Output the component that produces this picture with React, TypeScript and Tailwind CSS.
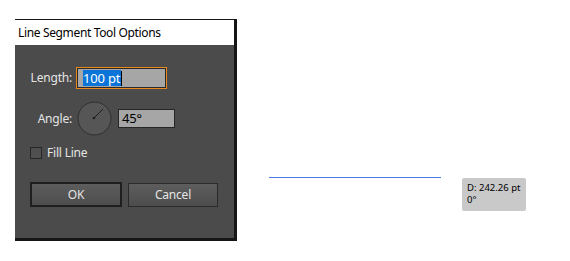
import { useState } from 'react'

const font = { fontFamily: '"Segoe UI", "Noto Sans", "DejaVu Sans", sans-serif' }

function Dial({ angle }: { angle: number }) {
  const r = (angle * Math.PI) / 180
  const x = 17 + Math.cos(r) * 13
  const y = 17 - Math.sin(r) * 13
  return (
    <svg width="35" height="35" viewBox="0 0 35 35" className="block">
      <circle cx="17.5" cy="17.5" r="16.5" fill="#565656" stroke="#2f2f2f" strokeWidth="1" />
      <line x1="17" y1="17" x2={x} y2={y} stroke="#1e1e1e" strokeWidth="1" />
      <circle cx="17" cy="17" r="1.3" fill="#1e1e1e" />
    </svg>
  )
}

export default function App() {
  const [fill, setFill] = useState(false)

  return (
    <div className="relative w-[570px] h-[261px] bg-white overflow-hidden" style={font}>
      <div className="flex pt-[19px] pl-[15px]">
        {/* Dialog */}
        <div className="w-[222px] h-[222px] flex flex-col border-t border-r-[3px] border-b-[3px] border-[#161616] bg-[#4b4b4b]">
          <div className="h-[25px] bg-white flex items-center pl-[3px] text-[12px] tracking-[-0.35px] text-black">
            Line Segment Tool Options
          </div>

          <div className="flex-1 flex flex-col text-[12px] tracking-[-0.2px] text-[#e4e4e4]">
            {/* Length */}
            <div className="flex items-center mt-[22px]">
              <span className="w-[57px] text-right">Length:</span>
              <div className="ml-[4px] w-[91px] h-[22px] border border-[#e8891d] bg-[#2a2a2a] p-px">
                <div className="h-full bg-[#a6a6a6] flex items-center pl-[5px]">
                  <span className="bg-[#0a74d8] text-white text-[13px] leading-[16px] pr-px">100 pt</span>
                  <span className="w-px h-[15px] bg-black" />
                </div>
              </div>
            </div>

            {/* Angle */}
            <div className="flex items-center mt-[12px]">
              <span className="w-[57px] text-right">Angle:</span>
              <div className="ml-[5px]">
                <Dial angle={45} />
              </div>
              <div className="ml-[6px] w-[57px] h-[19px] border border-[#262626] bg-[#a6a6a6] flex items-center pl-[3px] text-[13px] text-black">
                45°
              </div>
            </div>

            {/* Fill Line */}
            <label className="flex items-center h-[16px] mt-[9px] ml-[15px] cursor-default">
              <span
                onClick={() => setFill(!fill)}
                className="w-[12px] h-[12px] border border-[#262626] bg-[#4f4f4f] flex items-center justify-center text-[10px] leading-none text-[#e4e4e4]"
              >
                {fill ? '✓' : ''}
              </span>
              <span className="ml-[5px]">Fill Line</span>
            </label>

            {/* Buttons */}
            <div className="flex items-start mt-[21px] ml-[15px]">
              <button className="w-[92px] h-[25px] border-2 border-[#1f1f1f] bg-gradient-to-b from-[#5d5d5d] to-[#4d4d4d] text-[#e4e4e4] text-[12px]">
                OK
              </button>
              <button className="ml-[6px] mt-px w-[90px] h-[24px] border border-[#2a2a2a] bg-gradient-to-b from-[#5d5d5d] to-[#4d4d4d] text-[#e4e4e4] text-[12px]">
                Cancel
              </button>
            </div>
          </div>
        </div>
      </div>

      {/* Canvas: drawn line + measurement tooltip */}
      <div className="absolute left-[269px] top-[177px] w-[172px] h-px bg-[#4a78e0]" />
      <div className="absolute left-[462px] top-[178px] w-[64px] h-[33px] rounded-[2px] bg-[#c9c9c9] pl-[5px] pt-[4px] text-[9.5px] leading-[12px] text-black" style={{ fontFamily: '"Noto Sans", sans-serif' }}>
        <div>D: 242.26 pt</div>
        <div>0°</div>
      </div>
    </div>
  )
}
